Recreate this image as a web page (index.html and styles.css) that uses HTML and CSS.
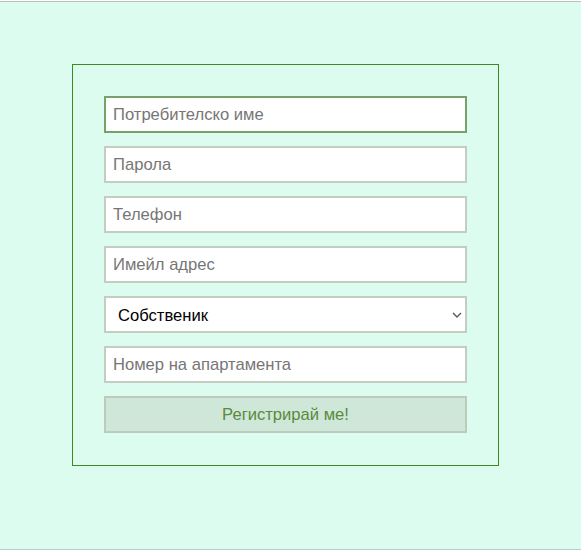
FILE: index.html
```html
<!DOCTYPE html>
<html lang="bg">
<head>
<meta charset="utf-8">
<title>Регистрация</title>
<link rel="stylesheet" href="styles.css">
</head>
<body>
<div class="page">
  <form class="card">
    <input class="field field-active" type="text" placeholder="Потребителско име">
    <input class="field" type="password" placeholder="Парола">
    <input class="field" type="text" placeholder="Телефон">
    <input class="field" type="email" placeholder="Имейл адрес">
    <div class="select-wrap">
      <select class="field select">
        <option>Собственик</option>
        <option>Наемател</option>
      </select>
      <svg class="chevron" width="10" height="6" viewBox="0 0 10 6" aria-hidden="true">
        <path d="M1 1 L5 5 L9 1" fill="none" stroke="#5a5a5a" stroke-width="1.4"/>
      </svg>
    </div>
    <input class="field" type="text" placeholder="Номер на апартамента">
    <button class="submit" type="button">Регистрирай ме!</button>
  </form>
</div>
</body>
</html>
```

FILE: styles.css
```css
html, body {
  margin: 0;
  padding: 0;
}
body {
  background: #ffffff;
  font-family: "Liberation Sans", Arial, sans-serif;
}
.page {
  margin-top: 1px;
  border-top: 1px solid #b9bdbb;
  border-bottom: 1px solid #c4c8c4;
  background: #dcfcef;
  padding-top: 62px;
  box-sizing: border-box;
  height: 549px;
}
.card {
  margin-left: 72px;
  width: 427px;
  height: 402px;
  box-sizing: border-box;
  border: 1px solid #3f8a1f;
  padding: 31px;
  display: flex;
  flex-direction: column;
  gap: 13px;
}
.field {
  width: 363px;
  height: 37px;
  box-sizing: border-box;
  margin: 0;
  border: 2px solid #c4cdc2;
  background: #ffffff;
  padding: 0 7px;
  font-family: "Liberation Sans", Arial, sans-serif;
  font-size: 16.6px;
  color: #000;
  outline: none;
  border-radius: 0;
}
.field::placeholder {
  color: #767676;
}
.field-active {
  border-color: #77a06a;
}
.select-wrap {
  position: relative;
  width: 363px;
  height: 37px;
}
.select {
  -webkit-appearance: none;
  appearance: none;
  padding: 1px 24px 0 12px;
  display: block;
}
.chevron {
  position: absolute;
  right: 5px;
  top: 16px;
  pointer-events: none;
}
.submit {
  width: 363px;
  height: 37px;
  box-sizing: border-box;
  margin: 0;
  border: 2px solid #bccbbc;
  background: #cfe7d9;
  color: #5a8a3b;
  font-family: "Liberation Sans", Arial, sans-serif;
  font-size: 16.6px;
  padding: 0;
  border-radius: 0;
}
```
